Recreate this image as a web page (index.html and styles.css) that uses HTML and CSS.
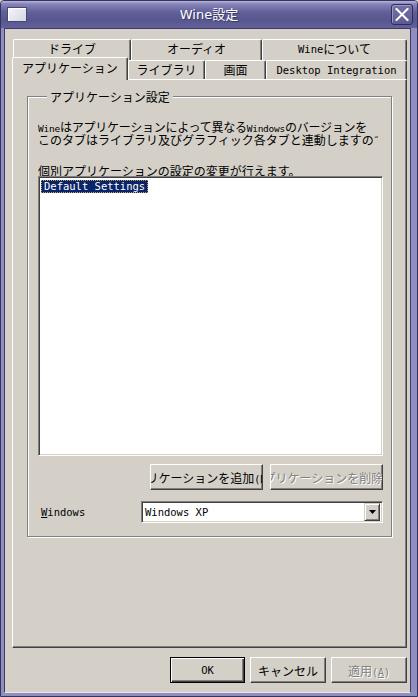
FILE: index.html
```html
<!DOCTYPE html>
<html lang="ja">
<head>
<meta charset="utf-8">
<title>Wine設定</title>
<link rel="stylesheet" href="styles.css">
</head>
<body>
<div class="window">
  <div class="titlebar">
    <div class="winicon"></div>
    <div class="title">Wine設定</div>
    <div class="close">
      <svg width="14" height="13" viewBox="0 0 14 13"><path d="M1.5 1 L12.5 12 M12.5 1 L1.5 12" stroke="#fff" stroke-width="2" fill="none" stroke-linecap="square"/></svg>
    </div>
  </div>
  <div class="client">
    <div class="tabs">
      <div class="tabrow back">
        <div class="tab t-drive">ドライブ</div>
        <div class="tab t-audio">オーディオ</div>
        <div class="tab t-about"><span class="en">Wine</span>について</div>
      </div>
      <div class="tabrow front">
        <div class="tab sel t-app">アプリケーション</div>
        <div class="tab t-lib">ライブラリ</div>
        <div class="tab t-gfx">画面</div>
        <div class="tab t-desk"><span class="en">Desktop Integration</span></div>
      </div>
    </div>
    <div class="panel">
      <div class="group">
        <div class="legend">アプリケーション設定</div>
        <div class="desc">
          <div class="line tight"><span class="en sm">Wine</span>はアプリケーションによって異なる<span class="en sm">Windows</span>のバージョンを</div>
          <div class="line">このタブはライブラリ及びグラフィック各タブと連動しますので</div>
        </div>
        <div class="line clip">個別アプリケーションの設定の変更が行えます。</div>
        <div class="listbox">
          <div class="item"><span class="hl en">Default Settings</span></div>
        </div>
        <div class="btnrow">
          <div class="btn wide"><span>アプリケーションを追加<span class="en bt">(D)...</span></span></div>
          <div class="btn wide disabled"><span>アプリケーションを削除<span class="en bt">(R)</span></span></div>
        </div>
        <div class="verrow">
          <div class="verlabel en"><u>W</u>indows</div>
          <div class="combo">
            <div class="combotext en">Windows XP</div>
            <div class="dropbtn"><svg width="7" height="4" viewBox="0 0 7 4"><path d="M0 0 H7 L3.5 4 Z" fill="#000"/></svg></div>
          </div>
        </div>
      </div>
    </div>
    <div class="actions">
      <div class="btn default b-ok"><span class="en">OK</span></div>
      <div class="btn b-cancel"><span>キャンセル</span></div>
      <div class="btn disabled b-apply"><span>適用<span class="en bt">(<u>A</u>)</span></span></div>
    </div>
  </div>
</div>
</body>
</html>
```

FILE: styles.css
```css
* { box-sizing: border-box; }
html, body { margin: 0; padding: 0; }
body {
  width: 418px;
  height: 697px;
  overflow: hidden;
  background: #d4d0c8;
  font-family: "Noto Sans CJK JP", "DejaVu Sans Mono", monospace;
  font-size: 12px;
  color: #000;
}
.en {
  font-family: "DejaVu Sans Mono", "Liberation Mono", monospace;
  font-size: 10.5px;
}
.en.sm { font-size: 9.5px; }
.en.bt { font-size: 10px; }
.window {
  width: 418px;
  height: 697px;
  display: flex;
  flex-direction: column;
  border: 1px solid #34345e;
  border-radius: 4px 4px 0 0;
  background: #908ebe;
}
.titlebar {
  height: 27px;
  flex: none;
  display: flex;
  align-items: center;
  padding: 0 4px 0 6px;
  background: linear-gradient(#b8b6dc 0, #8684b8 3px, #62609a 11px, #58568f 19px, #63619b 27px);
  color: #fff;
  border-radius: 3px 3px 0 0;
}
.winicon {
  width: 20px;
  height: 15px;
  flex: none;
  border: 1px solid #4a4870;
  background: linear-gradient(135deg, #f4f4f8, #d8d8e6);
  box-shadow: inset 1px 1px 0 #ffffff;
}
.title {
  flex: 1;
  text-align: center;
  font-family: "DejaVu Sans", "Noto Sans CJK JP", sans-serif;
  font-size: 13px;
  line-height: 16px;
  text-shadow: 1px 1px 0 #3a3866;
}
.close {
  width: 22px;
  height: 21px;
  flex: none;
  display: flex;
  align-items: center;
  justify-content: center;
  border: 1px solid #2e2c58;
  border-radius: 3px;
  background: linear-gradient(#7472a8, #5c5a92);
  box-shadow: inset 1px 1px 0 #9a98c8;
}
.client {
  flex: 1;
  display: flex;
  flex-direction: column;
  margin: 0 6px 3px 3px;
  border: 1px solid #3c3a6a;
  border-bottom-color: #e6e6ee;
  background: #d4d0c8;
  padding: 10px 3px 9px 7px;
}
.tabs { flex: none; }
.tabrow { display: flex; }
.tabrow.back { height: 19px; padding-left: 1px; }
.tabrow.front { height: 21px; align-items: flex-end; }
.tab {
  height: 19px;
  flex: none;
  display: flex;
  align-items: center;
  justify-content: center;
  border-top: 1px solid #ffffff;
  border-left: 1px solid #ffffff;
  border-right: 1px solid #404040;
  box-shadow: inset -1px 0 0 #808080;
  border-radius: 2px 2px 0 0;
  background: #d4d0c8;
  line-height: 14px;
  white-space: nowrap;
}
.tabrow.back .tab { height: 21px; align-self: flex-start; padding-bottom: 2px; }
.tab.sel {
  height: 23px;
  margin-bottom: -1px;
  position: relative;
  z-index: 1;
  padding-bottom: 2px;
}
.t-drive { width: 118px; }
.t-audio { width: 131px; }
.t-about { width: 145px; }
.t-app { width: 116px; }
.t-lib { width: 77px; }
.t-gfx { width: 61px; }
.t-desk { width: 141px; }

.panel {
  flex: 1;
  border: 1px solid;
  border-color: #ffffff #404040 #404040 #ffffff;
  box-shadow: inset -1px -1px 0 #808080;
  padding: 16px 14px 0 14px;
}
.group {
  border: 1px solid #808080;
  box-shadow: 1px 1px 0 #ffffff, inset 1px 1px 0 #ffffff;
  padding: 0 8px 13px 10px;
}
.legend {
  width: fit-content;
  margin: -8px 0 0 9px;
  padding: 0 3px;
  height: 15px;
  line-height: 15px;
  background: #d4d0c8;
  white-space: nowrap;
}
.desc { margin-top: 16px; }
.line {
  width: 340px;
  height: 13px;
  line-height: 13px;
  overflow: hidden;
  white-space: nowrap;
}
.line.tight { letter-spacing: -0.25px; }
.line.clip { margin-top: 18px; height: 12px; }
.listbox {
  height: 280px;
  background: #ffffff;
  border: 1px solid;
  border-color: #808080 #ffffff #ffffff #808080;
  box-shadow: inset 1px 1px 0 #404040, inset -1px -1px 0 #d4d0c8;
  padding: 1px 2px;
}
.item { height: 13px; line-height: 13px; }
.hl {
  display: inline-block;
  background: #0a246a;
  color: #ffffff;
  padding: 0 3px 0 3px;
  height: 13px;
  line-height: 13px;
  outline: 1px dotted #c8a050;
  outline-offset: -1px;
}
.btnrow {
  margin-top: 8px;
  display: flex;
  justify-content: flex-end;
  gap: 7px;
}
.btn {
  height: 26px;
  display: flex;
  align-items: center;
  justify-content: center;
  overflow: hidden;
  white-space: nowrap;
  background: #d4d0c8;
  border: 1px solid;
  border-color: #ffffff #404040 #404040 #ffffff;
  box-shadow: inset -1px -1px 0 #808080;
}
.btn > span { flex: none; }
.btn.wide { width: 113px; }
.btn.disabled { color: #808080; text-shadow: 1px 1px 0 #ffffff; }
.btn.default {
  border: 1px solid #000000;
  box-shadow: inset 1px 1px 0 #ffffff, inset -1px -1px 0 #404040, inset -2px -2px 0 #808080;
}
.verrow {
  margin-top: 11px;
  display: flex;
  align-items: center;
}
.verlabel { width: 103px; padding-left: 3px; }
.combo {
  width: 242px;
  height: 22px;
  display: flex;
  align-items: center;
  background: #ffffff;
  border: 1px solid;
  border-color: #808080 #ffffff #ffffff #808080;
  box-shadow: inset 1px 1px 0 #404040, inset -1px -1px 0 #d4d0c8;
  padding: 2px 2px 2px 3px;
}
.combotext { flex: 1; }
.dropbtn {
  width: 16px;
  height: 18px;
  display: flex;
  align-items: center;
  justify-content: center;
  background: #d4d0c8;
  border: 1px solid;
  border-color: #d4d0c8 #404040 #404040 #d4d0c8;
  box-shadow: inset 1px 1px 0 #ffffff, inset -1px -1px 0 #808080;
}
.actions {
  flex: none;
  margin-top: 9px;
  display: flex;
  justify-content: flex-end;
  gap: 5px;
}
.b-ok { width: 75px; }
.b-cancel { width: 76px; }
.b-apply { width: 76px; }
```
